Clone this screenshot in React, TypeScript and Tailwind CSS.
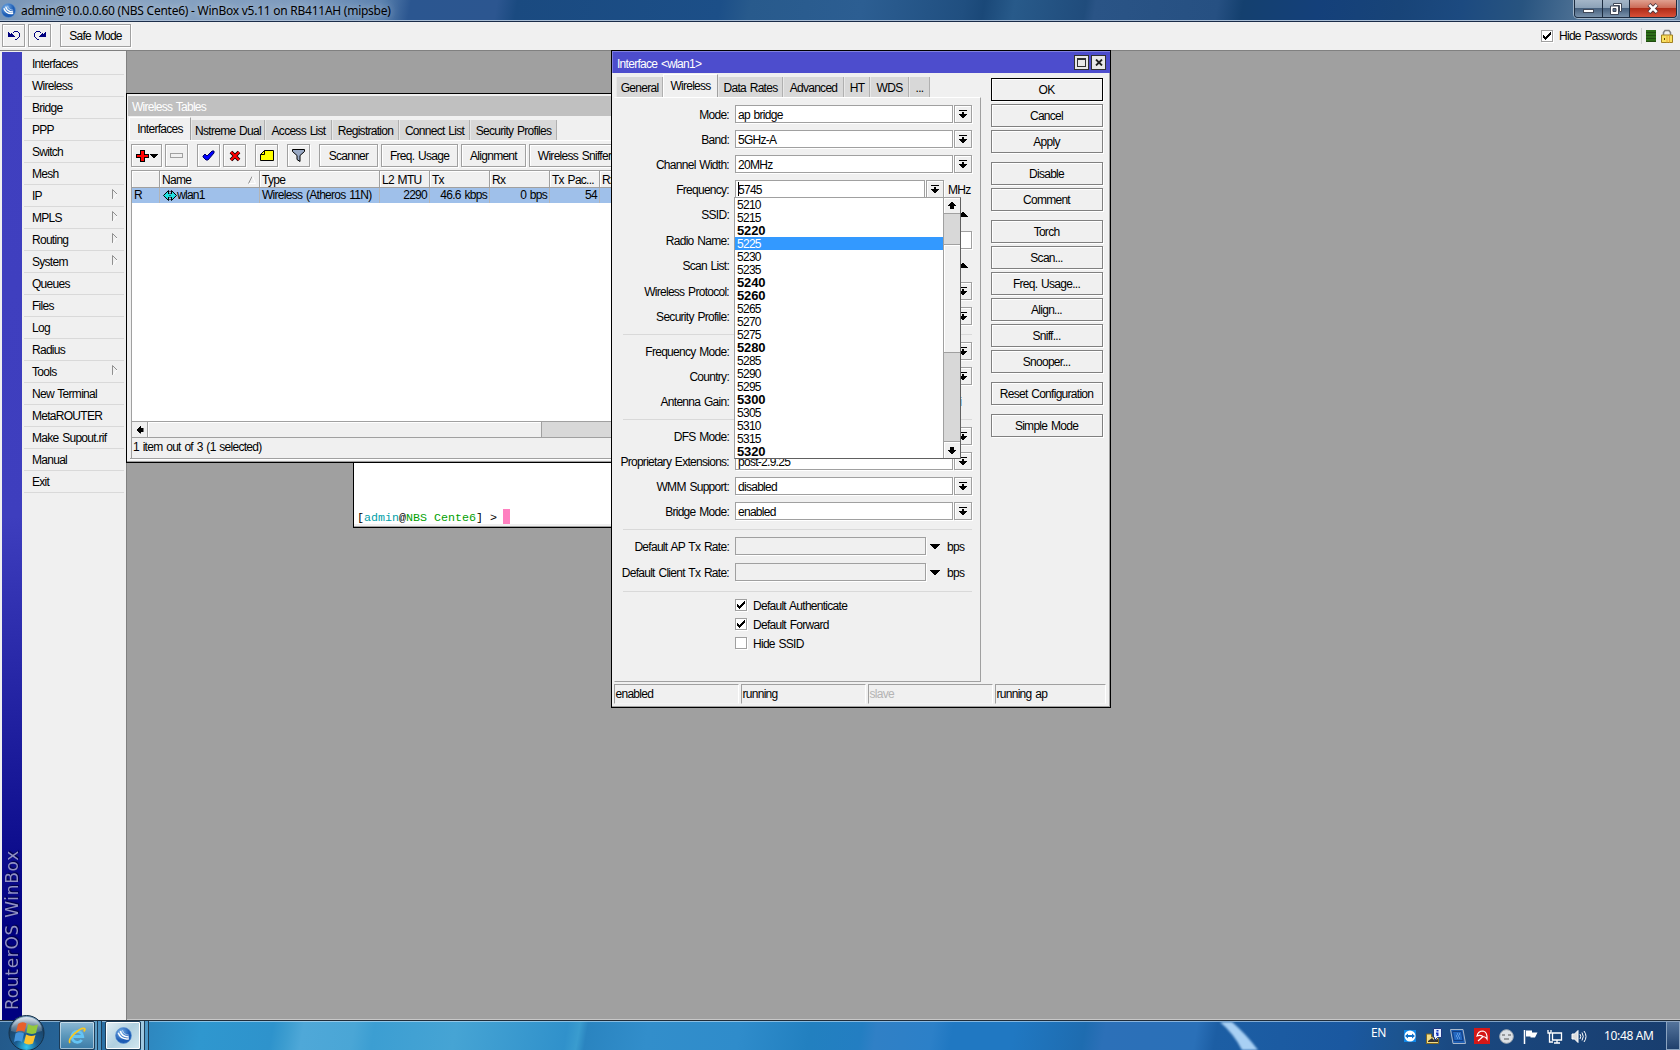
import React from "react";

type Kids = { children?: React.ReactNode };

const Line = ({ className = "" }: { className?: string }) => <div className={"shrink-0 h-px bg-[#d9d9d9] " + className} />;

/* ---------- icons ---------- */
const DropIcon = () => (
  <svg width="8" height="9" viewBox="0 0 8 9" shapeRendering="crispEdges"><path d="M0 0h8v1H0zM3 2h2v2h3v1H7v1H6v1H5v1H3V7H2V6H1V5H0V4h3z" /></svg>
);
const TriDown = () => (
  <svg width="10" height="5" viewBox="0 0 10 5" shapeRendering="crispEdges"><path d="M0 0h10v1H9v1H8v1H7v1H6v1H4V4H3V3H2V2H1V1H0z" /></svg>
);
const TriUp = () => (
  <svg width="10" height="5" viewBox="0 0 10 5" shapeRendering="crispEdges"><path d="M0 5h10V4H9V3H8V2H7V1H6V0H4v1H3v1H2v1H1v1H0z" /></svg>
);
const ArrowUp = () => (
  <svg width="8" height="7" viewBox="0 0 8 7" shapeRendering="crispEdges"><path d="M3 0h2v1h1v1h1v1h1v1H6v3H2V4H0V3h1V2h1V1h1z" /></svg>
);
const ArrowDown = () => (
  <svg width="8" height="7" viewBox="0 0 8 7" shapeRendering="crispEdges"><path d="M3 7h2V6h1V5h1V4h1V3H6V0H2v3H0v1h1v1h1v1h1z" /></svg>
);
const Check = () => (
  <svg width="8" height="8" viewBox="0 0 8 8" shapeRendering="crispEdges"><path d="M7 0h1v3H7v1H6v1H5v1H4v1H3v1H2V7H1V6H0V3h1v1h1v1h1V4h1V3h1V2h1V1h1z" /></svg>
);
const Undo = ({ flip = false }: { flip?: boolean }) => (
  <svg width="12" height="10" viewBox="0 0 12 10" fill="#000080" shapeRendering="crispEdges" className={flip ? "-scale-x-100" : ""}>
    <path d="M0 1h1v1h1v1h1V2h1v1h1v1h1v1h1v1H0zM5 1h1V0h4v1H6v1H5zM10 1h1v1h-1zM11 2h1v4h-1zM10 6h1v1h-1zM9 7h1v1H9zM7 8h2v1H7z" />
  </svg>
);
const WinBoxLogo = ({ size }: { size: number }) => (
  <svg width={size} height={size} viewBox="0 0 16 16">
    <defs><radialGradient id="wb" cx=".35" cy=".3"><stop offset="0" stopColor="#7db4ea" /><stop offset="1" stopColor="#1d5cb4" /></radialGradient></defs>
    <circle cx="8" cy="8" r="7.5" fill="url(#wb)" stroke="#5c94d4" strokeWidth=".6" />
    <path d="M3 5.500C4.500 9.500 8 11.800 13 11M5 3.800c1 4 4 5.700 8 5.600" fill="none" stroke="#fff" strokeWidth="1.400" />
    <path d="M7 3c.5 2.500 2.500 4.500 6 4.700" fill="none" stroke="#d6e7fa" strokeWidth=".7" />
  </svg>
);

/* ---------- controls ---------- */
const DropButton = () => (
  <div className="flex h-[18px] w-[18px] shrink-0 items-center justify-center border border-[#a0a0a0] bg-[#f0f0f0] shadow-[1px_1px_0_#fff,inset_1px_1px_0_#fff]"><DropIcon /></div>
);

const Field = ({ w, value = "", dim = false, caret = false }: { w: string; value?: string; dim?: boolean; caret?: boolean }) => (
  <div className={"flex h-[18px] shrink-0 items-center border border-[#a0a0a0] pl-[2px] shadow-[1px_1px_0_#fff] " + w + (dim ? " bg-[#f0f0f0]" : " bg-white")}>
    {caret && <div className="-mr-px h-[14px] w-px bg-black" />}<span className="pt-[2px]">{value}</span>
  </div>
);

const Row = ({ label, gap = "mt-[7px]", pad = "pt-[2px]", children }: Kids & { label: string; gap?: string; pad?: string }) => (
  <div className={"flex h-[18px] shrink-0 items-center " + gap}>
    <div className={"mr-[6px] flex w-[114px] shrink-0 justify-end whitespace-nowrap " + pad}>{label}</div>
    {children}
  </div>
);

const Select = ({ label, value = "", gap }: { label: string; value?: string; gap?: string }) => (
  <Row label={label} gap={gap}><Field w="w-[218px]" value={value} /><div className="w-px shrink-0" /><DropButton /></Row>
);

const CheckBox = ({ on, className = "" }: { on?: boolean; className?: string }) => (
  <div className={"flex h-[12px] w-[12px] shrink-0 items-center justify-center border border-[#a0a0a0] bg-white shadow-[1px_1px_0_#fff] " + className}>{on && <Check />}</div>
);

const CheckRow = ({ label, on }: { label: string; on?: boolean }) => (
  <div className="flex h-[19px] items-start pl-[120px] leading-[14px]"><CheckBox on={on} /><span className="ml-[6px]">{label}</span></div>
);

const Side = ({ label, gap = "mt-[3px]", main = false }: { label: string; gap?: string; main?: boolean }) => (
  <div className={"flex h-[23px] w-[112px] shrink-0 items-center justify-center border bg-[#f0f0f0] pr-px shadow-[1px_1px_0_#fff,inset_1px_1px_0_#fff] " + gap + (main ? " border-black" : " border-[#808080]")}>{label}</div>
);

const Tool = ({ w, children, gap = "ml-[3px]" }: Kids & { w: string; gap?: string }) => (
  <div className={"flex h-[23px] shrink-0 items-center justify-center whitespace-nowrap border border-[#a0a0a0] bg-[#f0f0f0] shadow-[1px_1px_0_#fff,inset_1px_1px_0_#fff] " + w + " " + gap}>{children}</div>
);

const Tab = ({ w, children, active = false }: Kids & { w: string; active?: boolean }) =>
  active ? (
    <div className={"flex h-[23px] shrink-0 items-center justify-center whitespace-nowrap border-l border-t border-r border-l-white border-t-white border-r-[#a0a0a0] bg-[#f0f0f0] pb-[1px] " + w}>{children}</div>
  ) : (
    <div className={"flex h-[20px] shrink-0 items-center justify-center whitespace-nowrap border-r border-l border-l-[#e8e8e8] border-r-[#b0b0b0] bg-[#d8d8d8] pt-[2px] " + w}>{children}</div>
  );

/* ---------- side menu ---------- */
const menu = ["Interfaces", "Wireless", "Bridge", "PPP", "Switch", "Mesh", "IP", "MPLS", "Routing", "System", "Queues", "Files", "Log", "Radius", "Tools", "New Terminal", "MetaROUTER", "Make Supout.rif", "Manual", "Exit"];
const nested = ["IP", "MPLS", "Routing", "System", "Tools"];

const Sidebar = () => (
  <div className="flex w-[127px] shrink-0 border-r border-[#808080] bg-[#f0f0f0]">
    <div className="ml-[2px] mt-px flex w-[20px] items-end bg-[linear-gradient(to_bottom,#4040c0_0,#3e3ebe_48%,#000080_92%)]">
      <div className="mb-[10px] ml-px h-[170px] w-[18px] rotate-180 whitespace-nowrap font-['DejaVu_Sans'] text-[17px] leading-[18px] tracking-[0.7px] text-[#9090c4] [text-shadow:1px_1px_1px_#000040] [word-spacing:0] [writing-mode:vertical-rl]">RouterOS WinBox</div>
    </div>
    <div className="ml-[2px] mt-[2px] w-[100px]">
      {menu.map((m) => (
        <div key={m} className="flex h-[22px] items-center justify-between border-b border-[#d9d9d9] pl-[8px] pr-[6px]">
          <span className="whitespace-nowrap">{m}</span>
          {nested.includes(m) && (
            <svg width="6" height="11" viewBox="0 0 6 11" className="-mt-[3px]"><path d="M.5 10V.5L5 5" fill="none" stroke="#909090" /><path d="M5 5L1 10" fill="none" stroke="#fff" /></svg>
          )}
        </div>
      ))}
    </div>
  </div>
);

/* ---------- windows ---------- */
const Terminal = () => (
  <div className="absolute left-[353px] top-[300px] flex h-[228px] w-[300px] flex-col justify-end border border-black bg-white">
    <div className="ml-[3px] flex h-[15px] items-center whitespace-pre font-['Liberation_Mono'] text-[11.670px] leading-[15px] tracking-normal [word-spacing:0]">
      <div className="pt-[3px]">[<span className="text-[#00a0a8]">admin</span>@<span className="text-[#00a000]">NBS Cente6</span>] &gt; </div>
      <span className="-ml-px h-[15px] w-[7px] bg-[#ff80c0]" />
    </div>
    <div className="h-[3px] border-b border-[#a0a0a0] bg-[#f0f0f0]" />
  </div>
);

const Head = ({ w, children }: Kids & { w: string }) => (
  <div className={"flex h-[17px] shrink-0 items-center overflow-hidden whitespace-nowrap border-b border-r border-[#a0a0a0] pl-[2px] pt-[2px] shadow-[inset_1px_1px_0_#fff] " + w}>{children}</div>
);
const Cell = ({ w, children, right = false }: Kids & { w: string; right?: boolean }) => (
  <div className={"flex h-[15px] shrink-0 items-center whitespace-nowrap border-r border-[#b4b4b4] px-[2px] pb-px " + w + (right ? " justify-end" : "")}>{children}</div>
);

const WirelessTables = () => (
  <div className="absolute left-[126px] top-[93px] flex h-[370px] w-[486px] flex-col overflow-hidden border border-black bg-[#f0f0f0] shadow-[inset_0_-1px_0_#a0a0a0]">
    <div className="ml-px mt-[2px] flex h-[20px] shrink-0 items-center bg-[#c0c0c0] pl-[4px] pt-[2px] text-white">Wireless Tables</div>
    <div className="ml-[2px] mt-[2px] flex h-[23px] shrink-0 items-end border-b border-white">
      <Tab w="w-[62px]" active>Interfaces</Tab>
      <Tab w="w-[74px]">Nstreme Dual</Tab>
      <Tab w="w-[67px]">Access List</Tab>
      <Tab w="w-[67px]">Registration</Tab>
      <Tab w="w-[71px]">Connect List</Tab>
      <Tab w="w-[87px]">Security Profiles</Tab>
    </div>
    <div className="mt-[3px] flex shrink-0">
      <Tool w="w-[31px]" gap="ml-[4px]">
        <svg width="22" height="13" viewBox="0 0 22 13" shapeRendering="crispEdges"><path d="M4 1h5v4h4v4H9v4H4V9H0V5h4z" /><path d="M5 2h3v4h4v2H8v4H5V8H1V6h4z" fill="#f00" /><path d="M14 5h8v1h-1v1h-1v1h-1v1h-2V8h-1V7h-1V6h-1z" /></svg>
      </Tool>
      <Tool w="w-[23px]"><div className="h-[5px] w-[13px] border border-[#a0a0a0] bg-[#f0f0f0]" /></Tool>
      <Tool w="w-[23px]" gap="ml-[9px]"><svg width="13" height="11" viewBox="0 0 13 11"><path d="M1 6l2-2 2 2 5-5h2v2L6 10H4L1 7z" fill="#00f" stroke="#000060" /></svg></Tool>
      <Tool w="w-[23px]"><svg width="12" height="12" viewBox="0 0 12 12"><path d="M2 2l8 8M10 2L2 10" stroke="#000" strokeWidth="3.800" /><path d="M2 2l8 8M10 2L2 10" stroke="#f00" strokeWidth="2.200" /></svg></Tool>
      <Tool w="w-[23px]" gap="ml-[9px]"><svg width="14" height="11" viewBox="0 0 14 11"><path d="M4.500.500h9v10H.500v-6zM4.500.500v4h-4" fill="#ff0" stroke="#000" /></svg></Tool>
      <Tool w="w-[23px]" gap="ml-[9px]"><svg width="13" height="13" viewBox="0 0 13 13"><path d="M.5.5h12v2L8 6.500v6L5 10.500v-4L.5 2.500z" fill="#98a8c4" stroke="#000" /></svg></Tool>
      <Tool w="w-[59px]" gap="ml-[9px]">Scanner</Tool>
      <Tool w="w-[77px]">Freq. Usage</Tool>
      <Tool w="w-[65px]">Alignment</Tool>
      <Tool w="w-[91px]">Wireless Sniffer</Tool>
    </div>
    <div className="ml-[4px] mt-[3px] flex min-h-0 flex-1 flex-col border-l border-t border-[#a0a0a0] bg-white">
      <div className="flex shrink-0 bg-[#f0f0f0]">
        <Head w="w-[28px]" />
        <Head w="w-[100px]"><span className="flex-1">Name</span><svg width="8" height="8" viewBox="0 0 8 8" className="mr-[3px]"><path d="M.5 7.500L4 .5" stroke="#909090" /><path d="M4.500.5L7.500 7.500H1" fill="none" stroke="#fff" /></svg></Head>
        <Head w="w-[120px]">Type</Head>
        <Head w="w-[50px]">L2 MTU</Head>
        <Head w="w-[60px]">Tx</Head>
        <Head w="w-[60px]">Rx</Head>
        <Head w="w-[50px]">Tx Pac...</Head>
        <Head w="w-[60px]">Rx</Head>
      </div>
      <div className="flex shrink-0 bg-[#9fc0ea]">
        <Cell w="w-[28px]">R</Cell>
        <Cell w="w-[100px]">
          <svg width="14" height="11" viewBox="0 0 14 11" className="ml-px"><path d="M.5 5.500L5.500.5v10zM13.500 5.500L8.500.5v10z" fill="#20e0e0" stroke="#000" /><path d="M3 5.500h8" stroke="#20e0e0" strokeWidth="3" /><path d="M7 1v9" stroke="#000" strokeDasharray="1 1" /></svg>wlan1
        </Cell>
        <Cell w="w-[120px]">Wireless (Atheros 11N)</Cell>
        <Cell w="w-[50px]" right>2290</Cell>
        <Cell w="w-[60px]" right>46.6 kbps</Cell>
        <Cell w="w-[60px]" right>0 bps</Cell>
        <Cell w="w-[50px]" right>54</Cell>
        <Cell w="w-[60px]" />
      </div>
      <div className="flex-1" />
      <div className="flex h-[17px] shrink-0 border-y border-[#a0a0a0] bg-[#d8d8d8]">
        <div className="flex w-[16px] items-center justify-center border-r border-[#a0a0a0] bg-[#f0f0f0]"><span className="-rotate-90"><ArrowUp /></span></div>
        <div className="w-[394px] border-r border-[#a0a0a0] bg-[#f0f0f0] shadow-[inset_1px_1px_0_#fff]" />
      </div>
      <div className="flex h-[20px] shrink-0 items-center bg-[#f0f0f0] pb-[2px] pl-px">1 item out of 3 (1 selected)</div>
    </div>
    <div className="ml-[3px] h-[4px] shrink-0 border-t border-[#a0a0a0] shadow-[inset_0_1px_0_#fff]" />
  </div>
);

const freqs = [5210, 5215, 5220, 5225, 5230, 5235, 5240, 5260, 5265, 5270, 5275, 5280, 5285, 5290, 5295, 5300, 5305, 5310, 5315, 5320];
const FreqList = () => (
  <div className="absolute left-[734px] top-[197px] flex h-[262px] w-[227px] overflow-hidden border border-b-[#606060] border-l-[#a0a0a0] border-r-[#606060] border-t-[#a0a0a0] bg-white">
    <div className="w-[208px] shrink-0">
      {freqs.map((f) => (
        <div key={f} className={"h-[13px] pl-[2px] leading-[14px]" + (f % 20 === 0 ? " text-[13px] font-bold tracking-[-0.15px]" : "") + (f === 5225 ? " bg-[#3399ff] text-white" : "")}>{f}</div>
      ))}
    </div>
    <div className="flex w-[17px] flex-col border-l border-[#a0a0a0] bg-[#d8d8d8]">
      <div className="flex h-[16px] shrink-0 items-center justify-center border-b border-[#a0a0a0] bg-[#f0f0f0] shadow-[inset_1px_1px_0_#fff]"><ArrowUp /></div>
      <div className="mt-[30px] h-[109px] border-y border-[#a0a0a0] bg-[#f0f0f0] shadow-[inset_1px_1px_0_#fff]" />
      <div className="mt-auto flex h-[17px] shrink-0 items-center justify-center border-t border-[#a0a0a0] bg-[#f0f0f0] shadow-[inset_1px_1px_0_#fff]"><ArrowDown /></div>
    </div>
  </div>
);

const Status = ({ w, children, dim = false }: Kids & { w: string; dim?: boolean }) => (
  <div className={"flex h-[20px] shrink-0 items-center border-b border-l border-r border-t border-b-[#f4f4f4] border-l-[#a0a0a0] border-r-white border-t-[#a0a0a0] pl-[0.5px] " + w + (dim ? " text-[#b4b4b4]" : "")}>{children}</div>
);

const Dialog = () => (
  <div className="absolute left-[611px] top-[50px] flex h-[658px] w-[500px] flex-col border border-black bg-[#f0f0f0] shadow-[inset_-1px_-1px_0_#a0a0a0]">
    <div className="flex h-[22px] shrink-0 items-center border-l border-t border-[#8080e0] bg-[#4d4dcd] pl-[4px] pr-[4px] text-white">
      <span className="flex-1 pt-[2px]">Interface &lt;wlan1&gt;</span>
      <div className="mr-[2px] flex h-[15px] w-[15px] items-center justify-center border border-[#303030] bg-[#e8e8e8]"><div className="h-[9px] w-[9px] border border-t-2 border-[#303030]" /></div>
      <div className="flex h-[15px] w-[15px] items-center justify-center border border-[#303030] bg-[#e8e8e8]"><svg width="8" height="7" viewBox="0 0 8 7"><path d="M1 .5l6 6M7 .5l-6 6" stroke="#202020" strokeWidth="1.800" /></svg></div>
    </div>
    <div className="flex min-h-0 flex-1">
      <div className="ml-[2px] mt-[2px] flex w-[367px] shrink-0 flex-col">
        <div className="flex h-[22px] shrink-0 items-end pl-[2px]">
          <Tab w="w-[47px]">General</Tab>
          <Tab w="w-[55px]" active>Wireless</Tab>
          <Tab w="w-[65px]">Data Rates</Tab>
          <Tab w="w-[61px]">Advanced</Tab>
          <Tab w="w-[26px]">HT</Tab>
          <Tab w="w-[39px]">WDS</Tab>
          <Tab w="w-[21px]">...</Tab>
        </div>
        <div className="flex h-[585px] flex-col border border-b-[#a0a0a0] border-l-[#f0f0f0] border-r-[#a0a0a0] border-t-white pr-[8px]">
          <Select label="Mode:" value="ap bridge" gap="mt-[7px]" />
          <Select label="Band:" value="5GHz-A" />
          <Select label="Channel Width:" value="20MHz" />
          <Row label="Frequency:"><Field w="w-[190px]" value="5745" caret /><div className="w-px shrink-0" /><DropButton /><span className="ml-[4px] pt-[2px]">MHz</span></Row>
          <Row label="SSID:" gap="mt-[8px]" pad=""><Field w="w-[200px]" /><span className="-mt-[2px] ml-[23px]"><TriUp /></span></Row>
          <Row label="Radio Name:"><Field w="w-[237px]" /></Row>
          <Row label="Scan List:" gap="mt-[8px]" pad=""><Field w="w-[200px]" /><span className="-mt-[2px] ml-[23px]"><TriUp /></span></Row>
          <Select label="Wireless Protocol:" />
          <Select label="Security Profile:" />
          <Line className="ml-[8px] mt-[9px]" />
          <Select label="Frequency Mode:" />
          <Select label="Country:" />
          <Row label="Antenna Gain:"><Field w="w-[190px]" /><span className="ml-[21px] pt-[2px]">dBi</span></Row>
          <Line className="ml-[8px] mt-[9px]" />
          <Select label="DFS Mode:" />
          <Select label="Proprietary Extensions:" value="post-2.9.25" />
          <Select label="WMM Support:" value="disabled" />
          <Select label="Bridge Mode:" value="enabled" />
          <Line className="ml-[8px] mt-[9px]" />
          <Row label="Default AP Tx Rate:"><Field w="w-[191px]" dim /><span className="ml-[4px] mr-[7px]"><TriDown /></span><span className="pt-[2px]">bps</span></Row>
          <Row label="Default Client Tx Rate:" gap="mt-[8px]"><Field w="w-[191px]" dim /><span className="ml-[4px] mr-[7px]"><TriDown /></span><span className="pt-[2px]">bps</span></Row>
          <Line className="mb-[7px] ml-[8px] mt-[10px]" />
          <CheckRow label="Default Authenticate" on />
          <CheckRow label="Default Forward" on />
          <CheckRow label="Hide SSID" />
        </div>
      </div>
      <div className="ml-[10px] mt-[5px] flex flex-col">
        <Side label="OK" gap="" main />
        <Side label="Cancel" />
        <Side label="Apply" />
        <Side label="Disable" gap="mt-[9px]" />
        <Side label="Comment" />
        <Side label="Torch" gap="mt-[9px]" />
        <Side label="Scan..." />
        <Side label="Freq. Usage..." />
        <Side label="Align..." />
        <Side label="Sniff..." />
        <Side label="Snooper..." />
        <Side label="Reset Configuration" gap="mt-[9px]" />
        <Side label="Simple Mode" gap="mt-[9px]" />
      </div>
    </div>
    <div className="mb-[3px] ml-[2px] flex shrink-0 gap-[2px]">
      <Status w="w-[125px]">enabled</Status>
      <Status w="w-[125px]">running</Status>
      <Status w="w-[125px]" dim>slave</Status>
      <Status w="w-[111px]">running ap</Status>
    </div>
  </div>
);

/* ---------- system chrome ---------- */
const TitleBar = () => (
  <div className="flex h-[22px] shrink-0 items-start border-b border-[#1a2c48] bg-[linear-gradient(100deg,#7896b8_0,#8aa4c2_120px,#7c9abd_300px,#5c83b0_375px,#2b5690_405px,#2c5690_490px,#1a4a80_510px,#1c4f88_710px,#285a8c_740px,#2c5e92_850px,#204f80_950px,#1a4878_970px,#285a8a_1000px,#204c7c_1070px,#2a5486_1080px,#265082_1200px,#14406f_1225px,#14407a_1300px,#184478_1380px,#1c4a80_1440px,#285480_1500px,#5c7c9c_1580px,#6888a8_1680px)] shadow-[inset_0_-1px_0_#a8bcd4]">
    <div className="ml-px mt-[3px]"><WinBoxLogo size={15} /></div>
    <span className="ml-[5px] mt-[2px] whitespace-nowrap font-['Noto_Sans'] text-[12px] leading-[17px] tracking-[-0.25px] text-black [text-shadow:0_0_8px_rgba(255,255,255,.7)] [word-spacing:0]">admin@10.0.0.60 (NBS Cente6) - WinBox v5.11 on RB411AH (mipsbe)</span>
    <div className="ml-auto mr-[3px] flex h-[18px] w-[103px] overflow-hidden rounded-b-[4px] border border-t-0 border-[#1c2c40] shadow-[0_0_0_1px_#a0b4c8]">
      <div className="flex w-[28px] items-end justify-center border-r border-[#1c2c40] bg-[linear-gradient(#a4b6c8_0,#8ca2b8_45%,#47617e_50%,#7890aa_100%)] pb-[4px]"><div className="h-[4px] w-[11px] border border-[#404858] bg-white" /></div>
      <div className="flex w-[27px] items-center justify-center border-r border-[#1c2c40] bg-[linear-gradient(#a4b6c8_0,#8ca2b8_45%,#47617e_50%,#7890aa_100%)]">
        <svg width="12" height="12" viewBox="0 0 12 12"><path d="M3.500.500h8v8h-2v-6h-6z" fill="#fff" stroke="#404858" /><path d="M.5 3h8v8.500h-8z" fill="#fff" stroke="#404858" /><path d="M3 5.500h3v3H3z" fill="#5d7593" stroke="#404858" /></svg>
      </div>
      <div className="flex flex-1 items-center justify-center bg-[linear-gradient(#e0a090_0,#cc6c58_45%,#b02c18_50%,#d85038_100%)]">
        <svg width="12" height="11" viewBox="0 0 12 11"><path d="M2 1.500l8 8M10 1.500l-8 8" stroke="#503840" strokeWidth="4.200" /><path d="M2.300 1.800l7.400 7.400M9.700 1.800L2.300 9.200" stroke="#fff" strokeWidth="2.600" /></svg>
      </div>
    </div>
  </div>
);

const MainToolbar = () => (
  <div className="flex h-[29px] shrink-0 items-start border-b border-[#808080] bg-[#f0f0f0]">
    <Tool w="mt-[2px] w-[23px]" gap="ml-[2px]"><Undo /></Tool>
    <Tool w="mt-[2px] w-[23px]"><Undo flip /></Tool>
    <Tool w="mt-[2px] w-[71px]" gap="ml-[9px]">Safe Mode</Tool>
    <div className="ml-auto mr-[7px] mt-[6px] flex h-[16px] items-center">
      <CheckBox on />
      <span className="ml-[6px] w-[77px] whitespace-nowrap">Hide Passwords</span>
      <div className="ml-[5px] mr-[4px] h-[16px] w-px bg-[#d0d0d0]" />
      <div className="mr-[5px] h-[12px] w-[10px] bg-[repeating-linear-gradient(#2c6c18_0,#2c6c18_2px,#204c10_2px,#204c10_3px)]" />
      <svg width="12" height="14" viewBox="0 0 12 14"><path d="M2.500 7V3.500L4 1.500h4l1.500 2V7" fill="none" stroke="#808080" strokeWidth="1.500" /><path d="M.5 6h11v7.500H.5z" fill="#f8e060" stroke="#a08020" /><path d="M6 6.500v7M8.500 6.500v7" stroke="#e8a840" /><path d="M3 9h1v2H3z" fill="#604000" /></svg>
    </div>
  </div>
);

const Taskbar = () => (
  <div className="relative flex h-[30px] shrink-0 items-center bg-[linear-gradient(100deg,#23598a_0,#28689c_90px,#2e88c0_150px,#2f97cf_200px,#2e93cc_270px,#3d9dd0_285px,#4fa8d8_300px,#4aa6d6_350px,#3c9ed2_370px,#46a4d4_450px,#3091cb_560px,#3a9ccf_572px,#2a84c0_580px,#328ecb_640px,#2f8ccb_730px,#2280c0_800px,#237ec2_850px,#3080c6_865px,#2c80c8_920px,#2078c2_940px,#2078c2_1000px,#1e6cb0_1070px,#2c70b8_1090px,#2a70b8_1180px,#1c5ea4_1200px,#1a58a0_1330px,#1c5490_1380px,#1a4880_1440px,#183c6c_1680px)] shadow-[inset_0_1px_0_#202c38,inset_0_2px_0_rgba(200,225,245,.6)]">
    <svg className="absolute left-[1210px] top-[2px]" width="60" height="28" viewBox="0 0 60 28"><path d="M10 0Q24 12 32 28h16Q36 12 22 0z" fill="#a8d0f4" style={{ filter: "blur(1px)" }} /></svg>
    <svg className="absolute -top-[5px] left-[8px]" width="37" height="35" viewBox="0 0 37 35">
      <defs>
        <radialGradient id="orb" cx=".5" cy=".9" r=".9"><stop offset="0" stopColor="#30c8f0" /><stop offset=".35" stopColor="#1a5c90" /><stop offset=".75" stopColor="#1c4468" /><stop offset="1" stopColor="#8cb0cc" /></radialGradient>
        <linearGradient id="shine" x2="0" y2="1"><stop offset="0" stopColor="#fff" stopOpacity=".75" /><stop offset="1" stopColor="#fff" stopOpacity=".1" /></linearGradient>
      </defs>
      <circle cx="18.500" cy="18" r="17.500" fill="url(#orb)" stroke="#153048" />
      <path d="M3 16a15.500 14 0 0 1 31 0Q18 21 3 16z" fill="url(#shine)" />
      <path d="M10 9q4-3 8.500-.5L16.500 17q-4-2.500-8.500 0z" fill="#e8602c" />
      <path d="M20 9q4.500 3 10 .5L28 18q-5 2-9.500-.5z" fill="#94c83c" />
      <path d="M7.500 18.500q4.500-2.500 8.500 0L14 27q-4-2.500-8 0z" fill="#4494dc" />
      <path d="M18 19.500q4.500 2.500 9.500.5L25 28.500q-5 2-9-.5z" fill="#fcc430" />
    </svg>
    <div className="ml-[59px] mt-px flex h-[29px] w-[36px] items-center justify-center rounded-[2px] border border-[#1c3c58] bg-[linear-gradient(#8cb8d4,#5c98bc_50%,#3c7ca8)] shadow-[inset_0_0_0_1px_rgba(255,255,255,.5)]">
      <svg width="18" height="18" viewBox="0 0 18 18"><path d="M13.800 13A5.500 5.500 0 1 1 14.800 9.500H5" fill="none" stroke="#64c4f4" strokeWidth="2.800" /><path d="M2 16C-1 12 12 0 16.500 1.500c1 .6 0 2-.7 3" fill="none" stroke="#f8c820" strokeWidth="1.700" /></svg>
    </div>
    <div className="mt-px h-[29px] w-[3px] border-r border-[#1c3c58] bg-[#5c9cc4]" /><div className="mt-px h-[29px] w-[4px] border-r border-[#1c3c58] bg-[#4890c0]" />
    <div className="ml-[3px] mt-px flex h-[29px] w-[36px] items-center justify-center rounded-[2px] border border-[#1c3c58] bg-[linear-gradient(135deg,#e4eef4,#b0d0e0_50%,#d4e8f0)] shadow-[inset_0_0_0_1px_#fff]"><WinBoxLogo size={17} /></div>
    <div className="mt-px h-[29px] w-[4px] border-r border-[#1c3c58] bg-[#a0c8e0]" /><div className="mt-px h-[29px] w-[4px] border-r border-[#1c3c58] bg-[#4c98c8]" />
    <div className="ml-auto flex h-full items-center font-['Noto_Sans'] text-white [word-spacing:0]">
      <span className="-mt-[5px] mr-[17px] text-[12px] tracking-[-0.4px]">EN</span>
      <svg className="mr-[9px] mt-[2px]" width="14" height="16" viewBox="0 0 14 16"><path d="M1 2h12v12H1z" fill="#1088e8" /><circle cx="7" cy="8" r="5.500" fill="#fff" /><path d="M2 8l3-2.500v1.500h4V5.500L12 8l-3 2.500V9H5v1.500z" fill="#1070c8" /></svg>
      <svg className="mr-[8px] mt-[2px]" width="16" height="16" viewBox="0 0 16 16"><path d="M.5 6h5v3h7v6.500H.5z" fill="#f0dc88" stroke="#806820" /><path d="M2 13l4-3 2 2 4-1v3H2z" fill="#333" /><path d="M7.500.5h8v9h-4l-3 3v-3h-1z" fill="#e8f0ff" stroke="#203880" /><path d="M10.500 2h2v1.500h-2zM10 4.500h2.500V8h-2V6H10z" fill="#1030c0" /></svg>
      <svg className="mr-[8px] mt-[2px]" width="16" height="15" viewBox="0 0 16 15"><path d="M.5.5h12.500l2.500 14H3z" fill="#1c5cb0" stroke="#a8b8cc" /><path d="M2.500 2.500h9l1.500 9H4z" fill="#2468c0" stroke="#103c80" /><path d="M6 7h4M7 5h3M7 9h3" stroke="#8cc0f8" strokeDasharray="1 1" /></svg>
      <svg className="mr-[9px] mt-[2px]" width="16" height="16" viewBox="0 0 16 16"><path d="M0 0h16v16H0z" fill="#d41818" /><path d="M3 8Q4 3 9 3q4.500 1 4 8-1.500-2.500-4-2.500Q6 6.500 3 8zM9 8.500L4 13" fill="none" stroke="#fff" strokeWidth="1.200" /></svg>
      <svg className="mr-[9px] mt-[2px]" width="15" height="15" viewBox="0 0 15 15"><circle cx="7.500" cy="7.500" r="6.800" fill="#dce0e4" stroke="#a8b0b8" /><path d="M3 6h3M9 6h3M5 10h5" stroke="#555" /></svg>
      <svg className="mr-[9px] mt-[2px]" width="15" height="15" viewBox="0 0 15 15"><path d="M1.500 1v14" stroke="#fff" strokeWidth="1.500" /><path d="M3 1.500h6v2h5.500L12 8.500H7.500v-1H3z" fill="#fff" /></svg>
      <svg className="mr-[8px] mt-[2px]" width="16" height="15" viewBox="0 0 16 15"><path d="M5.500 4h9v7h-9zM10 11v3M7 14h6M1 1v3h3V1M2.500 4v9H6" fill="none" stroke="#fff" strokeWidth="1.300" /></svg>
      <svg className="mr-[17px] mt-[2px]" width="16" height="15" viewBox="0 0 16 15"><path d="M1 5h2.500L7 1.500v12L3.500 10H1z" fill="#ddd" stroke="#fff" /><path d="M9 5q1.500 2.500 0 5M11 3.500q2.500 4 0 8M13 2q4 5.500 0 11" fill="none" stroke="#fff" /></svg>
      <span className="mr-[12px] mt-[2px] w-[50px] whitespace-nowrap text-[12px] tracking-[-0.35px]">10:48 AM</span>
      <div className="mt-px h-[29px] w-[14px] border border-[#8ca4c0] bg-[linear-gradient(#54749c,#20406c)]" />
    </div>
  </div>
);

export default function App() {
  return (
    <div className="relative flex h-[1050px] w-[1680px] flex-col overflow-hidden bg-[#a0a0a0] font-['Liberation_Sans',sans-serif] text-[12px] leading-[14px] tracking-[-0.72px] text-black [word-spacing:1.100px]">
      <TitleBar />
      <MainToolbar />
      <div className="flex min-h-0 flex-1">
        <Sidebar />
        <div className="flex-1 border-b border-[#c8c8c8] bg-[#a0a0a0]" />
      </div>
      <Taskbar />
      <Terminal />
      <WirelessTables />
      <Dialog />
      <FreqList />
    </div>
  );
}
